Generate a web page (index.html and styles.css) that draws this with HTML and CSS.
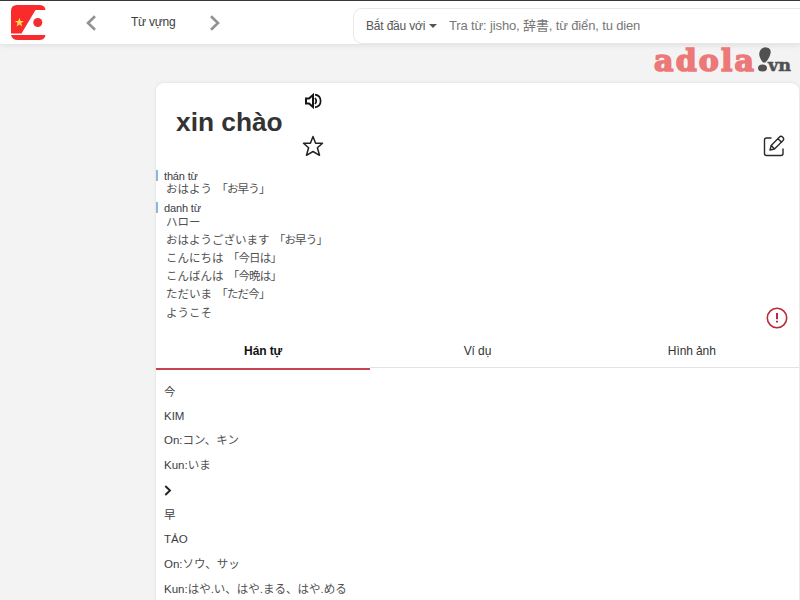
FILE: index.html
```html
<!DOCTYPE html>
<html lang="vi">
<head>
<meta charset="utf-8">
<title>xin chào</title>
<link rel="stylesheet" href="styles.css">
</head>
<body>
<header class="topbar">
  <svg class="logo" width="36" height="36" viewBox="0 0 36 36">
    <path fill="#fa2b2d" d="M6 0H28Q34 0 34.500 5H24.500L10.500 28.500H0V6Q0 0 6 0ZM0 30H34.500Q34 35 28 35H7Q1 35 0 30Z"/>
    <circle cx="26.800" cy="17.500" r="4.500" fill="#f42b30"/>
    <path fill="#ffdc4a" d="M8.400 12.800L9.500 16H13L10.200 18.100L11.200 21.500L8.400 19.500L5.600 21.500L6.600 18.100L3.800 16H7.300Z"/>
  </svg>
  <svg class="prev" width="12" height="18" viewBox="0 0 12 18"><path class="arrow" d="M10 2.200L3 9L10 15.800"/></svg>
  <span class="section">Từ vựng</span>
  <svg class="next" width="12" height="18" viewBox="0 0 12 18"><path class="arrow" d="M2 2.200L9 9L2 15.800"/></svg>
  <div class="search">
    <span class="mode">Bắt đầu với</span><span class="caret"></span>
    <span class="hint">Tra từ: jisho, 辞書, từ điển, tu dien</span>
  </div>
</header>
<div class="sponsor">
  <svg width="142" height="34" viewBox="0 0 142 34">
    <text class="brand" x="2" y="27" textLength="100" lengthAdjust="spacing">adola</text>
    <path fill="#505052" d="M111 18.500C105 12 106.500 4.500 113 3.200C121 3.500 120 11 113.500 18.500Z"/>
    <ellipse cx="110.500" cy="24" rx="4.500" ry="3.600" fill="#505052"/>
    <text class="tld" x="116" y="26.500" textLength="23" lengthAdjust="spacingAndGlyphs">vn</text>
  </svg>
</div>
<main class="card">
  <div class="word">
    <h1>xin chào</h1>
    <div class="actions">
      <svg width="18" height="16" viewBox="0 0 18 16" fill="none" stroke="#151515" stroke-width="2"><path d="M2 5.500H5L9 2V14L5 10.500H2Z"/><path d="M11 5Q13.500 8 11 11M11 1.700C18.500 3 18.500 13 11 14.300" stroke-width="1.700"/></svg>
      <svg class="star" width="22" height="22" viewBox="0 0 22 22" fill="none" stroke="#222" stroke-width="1.500" stroke-linejoin="round"><path d="M11 1.500L13.600 8.200H20.500L15.400 12.800L17.500 20.300L11 16.500L4.500 20.300L6.600 12.800L1.500 8.200H8.400Z"/></svg>
    </div>
    <svg class="edit" width="22" height="22" viewBox="0 0 22 22" fill="none" stroke="#292929" stroke-width="1.400" stroke-linejoin="round" stroke-linecap="round"><path d="M8 3H3.500Q1.500 3 1.500 5V18.500Q1.500 20.500 3.500 20.500H18Q20 20.500 20 18.500V14"/><path d="M7 15L8.200 10.500L16.500 2Q18 .5 19.800 2.200Q21.500 4 20 5.500L11.500 14ZM15 3.700L18.500 7.200M8.200 10.500L11.500 14"/></svg>
  </div>
  <section class="meanings">
    <div class="kind">thán từ</div>
    <ul><li>おはよう <span class="form">「お早う」</span></li></ul>
    <div class="kind second">danh từ</div>
    <ul>
      <li>ハロー</li>
      <li>おはようございます <span class="form">「お早う」</span></li>
      <li>こんにちは <span class="form">「今日は」</span></li>
      <li>こんばんは <span class="form">「今晩は」</span></li>
      <li>ただいま <span class="form">「ただ今」</span></li>
      <li>ようこそ</li>
    </ul>
    <svg class="report" width="22" height="22" viewBox="0 0 22 22" fill="none" stroke="#b92c3b"><circle cx="11" cy="11" r="9.700" stroke-width="1.600"/><path d="M11 6V12.200M11 13.700V15.600" stroke-width="2"/></svg>
  </section>
  <nav class="tabs"><span class="active">Hán tự</span><span>Ví dụ</span><span>Hình ảnh</span></nav>
  <section class="kanji">
    <p class="glyph">今</p>
    <p>KIM</p>
    <p>On:<span class="kana">コン、キン</span></p>
    <p>Kun:<span class="kana">いま</span></p>
    <p><svg class="more" width="8" height="11" viewBox="0 0 8 11"><path d="M1.300 1L6 5.500L1.300 10" fill="none" stroke="#222" stroke-width="1.900"/></svg></p>
    <p class="glyph">早</p>
    <p>TẢO</p>
    <p>On:<span class="kana">ソウ、サッ</span></p>
    <p>Kun:<span class="kana">はや.い、はや.まる、はや.める</span></p>
  </section>
</main>
</body>
</html>
```

FILE: styles.css
```css
* { box-sizing: border-box; }
body {
  margin: 0;
  height: 600px;
  overflow: hidden;
  background: #f3f3f3;
  color: #3c3c3e;
  font: 11.5px/18px "Liberation Sans", "Noto Sans CJK JP", sans-serif;
}
.topbar {
  display: flex;
  align-items: center;
  height: 44px;
  padding-left: 11px;
  overflow: hidden;
  background: #fff;
  border-top: 1px solid #3b383b;
  box-shadow: 0 1px 5px #ddd;
}
.logo, .prev, .next { flex: none; }
.prev { margin-left: 38px; }
.section { width: 45px; margin: -2px 0 0 34px; font-size: 12px; letter-spacing: -.25px; white-space: nowrap; }
.next { margin-left: 33px; }
.arrow { fill: none; stroke: #929292; stroke-width: 2.6; }
.search {
  display: flex;
  flex: 1;
  align-items: center;
  height: 36px;
  margin: 7px -10px 0 132px;
  padding-left: 12px;
  border: 1px solid #e8e8e8;
  border-radius: 9px;
  white-space: nowrap;
}
.mode { width: 60px; color: #555; font-size: 12px; letter-spacing: -.18px; }
.caret { margin: 0 0 1px 3px; border: 4px solid transparent; border-top-color: #555; border-bottom: 0; }
.hint { margin-left: 12px; color: #777; font-size: 13px; letter-spacing: -.14px; }
.sponsor { display: flex; justify-content: flex-end; height: 39px; padding-right: 6px; }
.sponsor svg { display: block; }
.brand { fill: #ec7878; stroke: #ec7878; stroke-width: 1.6; font: bold 30px "DejaVu Serif", serif; }
.tld { fill: #505052; stroke: #505052; stroke-width: .5; font: bold 16px "DejaVu Serif", serif; }
.card {
  width: 643px;
  height: 540px;
  margin-left: 156px;
  background: #fff;
  border-radius: 8px;
  box-shadow: 0 0 3px #d8d8d8;
}
.word { display: flex; height: 86px; padding: 0 14px 0 20px; }
h1 { width: 126px; margin: 24px 0 0; color: #333; font-size: 26.3px; line-height: 30px; white-space: nowrap; }
.actions { display: flex; flex-direction: column; align-items: center; width: 22px; padding-top: 10px; }
.star { margin-top: 26px; }
.edit { margin: 52px 0 0 auto; }
.meanings { position: relative; height: 167px; }
.kind { height: 11px; padding-left: 6px; border-left: 2px solid #86b7e5; line-height: 13px; font-size: 11px; letter-spacing: -.15px; }
.kind { margin-top: 1px; }
.meanings .kind:first-child { margin-top: 0; transform: translateY(1px); }
.kind.second { margin-top: 4px; }
ul { margin: 0; padding: 0 0 0 10px; list-style: none; color: #505052; }
li { height: 18.1px; }
.form { margin-left: 1px; letter-spacing: -.8px; }
.kana { color: #505052; }
.report { position: absolute; right: 11px; top: 138px; }
.tabs { display: grid; grid-template-columns: repeat(3, 1fr); height: 34px; text-align: center; line-height: 31px; color: #333; font-size: 12px; letter-spacing: -.1px; }
.tabs span { border-bottom: 1px solid #e3e3e3; height: 32px; }
.tabs .active { height: 34px; border-bottom: 2px solid #c84250; color: #111; font-weight: bold; }
.kanji { padding: 9px 8px 0; }
.kanji p { height: 24.7px; margin: 0; line-height: 25px; }
.kanji .glyph { line-height: 27px; }
.more { display: block; transform: translateY(7px); }
```
